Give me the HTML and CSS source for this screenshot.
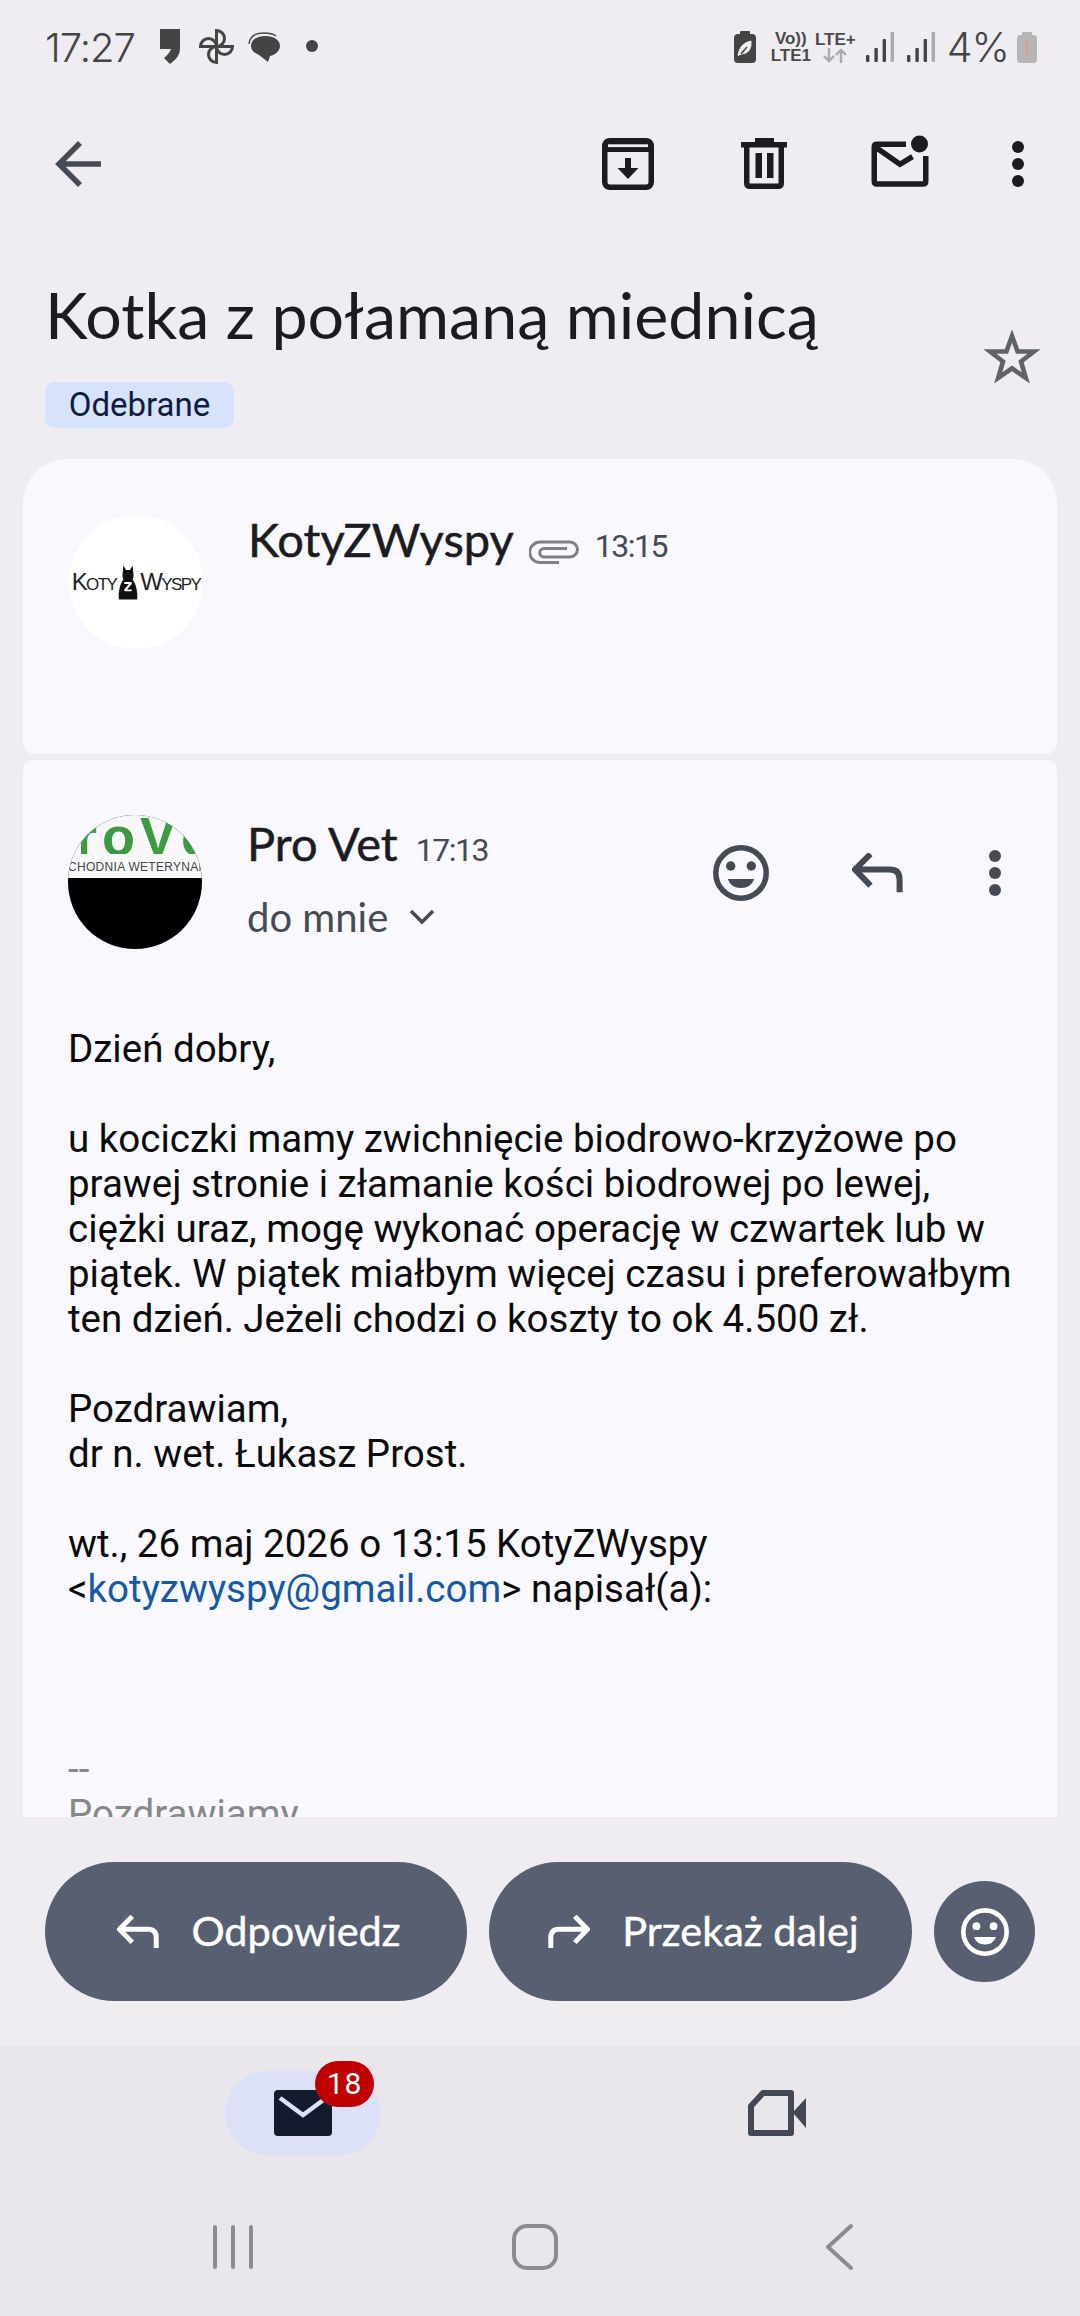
FILE: index.html
```html
<!DOCTYPE html>
<html lang="pl">
<head>
  <meta charset="UTF-8">
  <meta name="viewport" content="width=device-width, initial-scale=1">
  <title>Kotka z połamaną miednicą</title>
  <link rel="stylesheet" href="styles.css">
</head>
<body>
  <div class="screen">

    <div class="status-bar">
      <div class="time">17:27</div>
      <svg class="notif-icons" width="158" height="36" viewBox="160 30 158 36">
        <path d="M160 30H180V50Q180 58 170 65L164 59Q170 54 171 50H160Z" fill="#444"/>
        <g transform="translate(216.5 47.5)" fill="none" stroke="#444" stroke-width="3">
          <path d="M0 0V-16A8 8 0 0 1 0 0Z"/>
          <path d="M0 0V-16A8 8 0 0 1 0 0Z" transform="rotate(90)"/>
          <path d="M0 0V-16A8 8 0 0 1 0 0Z" transform="rotate(180)"/>
          <path d="M0 0V-16A8 8 0 0 1 0 0Z" transform="rotate(270)"/>
        </g>
        <path d="M249 45Q250 34 264 34Q272 34 276 37" fill="none" stroke="#444" stroke-width="1.5"/>
        <path d="M265 37C274 37 280 41 280 47C280 52 275 56 270 57L268 63L259 56C254 54 251 51 251 47C251 41 257 37 265 37Z" fill="#444"/>
        <circle cx="312" cy="47" r="6" fill="#444"/>
      </svg>
      <div class="status-right">
        <svg class="leaf-batt" width="22" height="32" viewBox="0 0 22 32">
          <rect x="6" y="0" width="10" height="4" rx="1" fill="#444"/>
          <rect x="0" y="3" width="22" height="29" rx="4" fill="#444"/>
          <path d="M4 24Q6 12 17 10Q18 22 8 23ZM4 25L11 17" fill="#f0eef3" stroke="#f0eef3" stroke-width="1"/>
          <path d="M7 23L13 16" stroke="#444" stroke-width="1.5"/>
        </svg>
        <div class="net net-volte"><span>Vo))</span><span>LTE1</span></div>
        <div class="net net-lte">
          <span>LTE+</span>
          <svg width="24" height="15" viewBox="0 0 24 15" fill="none" stroke="#aaa" stroke-width="2.4">
            <path d="M6 0V13M1 8L6 13L11 8"/>
            <path d="M18 15V2M13 7L18 2L23 7"/>
          </svg>
        </div>
        <svg class="signal" width="28" height="30" viewBox="0 0 28 30">
          <rect x="0" y="23" width="3.4" height="7" rx="1" fill="#444"/>
          <rect x="8.4" y="16" width="3.4" height="14" rx="1" fill="#444"/>
          <rect x="16.6" y="7" width="3.4" height="23" rx="1" fill="#444"/>
          <rect x="24.6" y="0" width="3.4" height="30" rx="1" fill="#aaa"/>
        </svg>
        <svg class="signal signal-2" width="28" height="30" viewBox="0 0 28 30">
          <rect x="0" y="23" width="3.4" height="7" rx="1" fill="#444"/>
          <rect x="8.4" y="16" width="3.4" height="14" rx="1" fill="#444"/>
          <rect x="16.6" y="7" width="3.4" height="23" rx="1" fill="#444"/>
          <rect x="24.6" y="0" width="3.4" height="30" rx="1" fill="#aaa"/>
        </svg>
        <div class="battery-pct">4%</div>
        <svg class="battery" width="20" height="31" viewBox="0 0 20 31">
          <rect x="5" y="0" width="10" height="4" rx="1" fill="#b6b5b8"/>
          <rect x="0" y="3" width="20" height="28" rx="3.5" fill="#b6b5b8"/>
          <rect x="9" y="9" width="2.4" height="11" fill="#e59a82"/>
          <rect x="9" y="22" width="2.4" height="3" fill="#e59a82"/>
        </svg>
      </div>
    </div>

    <div class="top-bar">
      <div class="icon-btn back-btn">
        <svg width="72" height="72" viewBox="0 0 72 72" fill="none" stroke="#454a54" stroke-width="5.5">
          <path d="M60 36H19M39 15L18 36L39 57"/>
        </svg>
      </div>
      <div class="top-actions">
        <div class="icon-btn">
          <svg width="72" height="72" viewBox="0 0 72 72" fill="none">
            <rect x="12.75" y="12.75" width="46.5" height="46.5" rx="5" stroke="#1c1b20" stroke-width="5.5"/>
            <rect x="12" y="12" width="48" height="12" fill="#1c1b20"/>
            <rect x="16" y="16.3" width="40" height="2.8" fill="#efedf2"/>
            <path d="M33 30H39V40H46.5L36 51L25.5 40H33Z" fill="#1c1b20"/>
          </svg>
        </div>
        <div class="icon-btn">
          <svg width="72" height="72" viewBox="0 0 72 72" fill="#1c1b20">
            <rect x="27" y="10" width="19" height="6"/>
            <rect x="13" y="14" width="46" height="5.5"/>
            <path d="M18.75 18V55Q18.75 58.25 22 58.25H50Q53.25 58.25 53.25 55V18" fill="none" stroke="#1c1b20" stroke-width="5.5"/>
            <rect x="27.5" y="25" width="6.5" height="25"/>
            <rect x="39" y="25" width="6.5" height="25"/>
          </svg>
        </div>
        <div class="icon-btn mail-btn">
          <svg width="72" height="72" viewBox="0 0 72 72" fill="none" stroke="#1c1b20" stroke-width="5.5">
            <path d="M42 16.3H13Q10.25 16.3 10.25 19V53Q10.25 56 13 56H59Q61.75 56 61.75 53V28"/>
            <path d="M12.7 20L36 36.3L48.5 28.7"/>
            <circle cx="55.5" cy="16" r="8.5" fill="#1c1b20" stroke="none"/>
          </svg>
        </div>
        <div class="icon-btn">
          <svg width="72" height="72" viewBox="0 0 72 72" fill="#1c1b20">
            <circle cx="36" cy="19" r="6"/>
            <circle cx="36" cy="36" r="6"/>
            <circle cx="36" cy="53" r="6"/>
          </svg>
        </div>
      </div>
    </div>

    <div class="subject">
      <div class="subject-main">
        <h1 class="subject-title">Kotka z połamaną miednicą</h1>
        <span class="chip">Odebrane</span>
      </div>
      <svg class="star" width="56" height="56" viewBox="0 0 56 56" fill="none" stroke="#5f6368" stroke-width="4.6">
        <path d="M28 6L33.6 21.5H50L37 31.5L41.8 48L28 38.4L14.2 48L19 31.5L6 21.5H22.4Z"/>
      </svg>
    </div>

    <div class="thread">
      <div class="card card-first">
        <div class="avatar avatar-koty">
          <span class="koty-text">Koty</span>
          <svg width="24" height="37" viewBox="0 0 26 37">
            <path d="M8 0L11 5H15L18 0L19 10Q19 14 18 15Q24 24 23 37H3Q2 24 8 15Q7 14 7 10Z" fill="#111"/>
            <path d="M9 18H17V20L12 26H17V28H9V26L14 20H9Z" fill="#fff"/>
          </svg>
          <span class="koty-text">Wyspy</span>
        </div>
        <div class="sender-line sender-first">
          <span class="sender-name">KotyZWyspy</span>
          <svg class="clip" width="51" height="24" viewBox="0 0 51 24" fill="none" stroke="#808080" stroke-width="3">
            <path d="M30 22.5H11A9.5 9.5 0 0 1 11 2H41A7.5 7.5 0 0 1 41 17H15A4 4 0 0 1 15 8.500H38"/>
          </svg>
          <span class="sender-time">13:15</span>
        </div>
      </div>

      <div class="card card-open">
        <div class="mail-head">
          <div class="avatar avatar-vet">
            <div class="vet-top">
              <div class="vet-logo">roVc</div>
              <div class="vet-sub">CHODNIA WETERYNAR</div>
            </div>
          </div>
          <div class="sender-info">
            <div class="sender-line">
              <span class="sender-name">Pro Vet</span>
              <span class="sender-time">17:13</span>
            </div>
            <div class="recipient">
              do mnie
              <svg width="26" height="16" viewBox="0 0 26 16" fill="none" stroke="#454a54" stroke-width="3.4">
                <path d="M2 2L13 13L24 2"/>
              </svg>
            </div>
          </div>
          <div class="mail-actions">
            <svg width="60" height="60" viewBox="-30 -30 60 60" fill="#454a54">
              <circle r="25.200" fill="none" stroke="#454a54" stroke-width="5.5"/>
              <circle cx="-10.300" cy="-7" r="4.700"/>
              <circle cx="10.300" cy="-7" r="4.700"/>
              <path d="M-13.300 6H13.300Q10 15 0 15Q-10 15 -13.300 6Z"/>
            </svg>
            <svg class="mail-reply" width="51" height="40" viewBox="0 0 51 40" fill="none" stroke="#454a54" stroke-width="6">
              <path d="M18.500 1L3 16.600L18.500 32.600M3 16.600H37.600Q47.600 16.600 47.600 26.600V39.300"/>
            </svg>
            <svg class="mail-more" width="14" height="48" viewBox="0 0 14 48" fill="#454a54">
              <circle cx="7" cy="7" r="6"/>
              <circle cx="7" cy="24" r="6"/>
              <circle cx="7" cy="41" r="6"/>
            </svg>
          </div>
        </div>

        <div class="mail-body">
          <p>Dzień dobry,</p>
          <p>u kociczki mamy zwichnięcie biodrowo-krzyżowe po prawej stronie i złamanie kości biodrowej po lewej, ciężki uraz, mogę wykonać operację w czwartek lub w piątek. W piątek miałbym więcej czasu i preferowałbym ten dzień. Jeżeli chodzi o koszty to ok 4.500 zł.</p>
          <p>Pozdrawiam,<br>dr n. wet. Łukasz Prost.</p>
          <p>wt., 26 maj 2026 o 13:15 KotyZWyspy<br>&lt;<a class="mail-link" href="#">kotyzwyspy@gmail.com</a>&gt; napisał(a):</p>
          <p class="signature">--<br>Pozdrawiamy</p>
        </div>
      </div>
    </div>

    <div class="actions">
      <div class="action-btn">
        <svg width="42" height="34" viewBox="0 0 51 40" fill="none" stroke="#fff" stroke-width="6">
          <path d="M18.500 1L3 16.600L18.500 32.600M3 16.600H37.600Q47.600 16.600 47.600 26.600V39.300"/>
        </svg>
        Odpowiedz
      </div>
      <div class="action-btn action-forward">
        <svg width="42" height="34" viewBox="0 0 51 40" fill="none" stroke="#fff" stroke-width="6">
          <path d="M32.500 1L48 16.600L32.500 32.600M48 16.600H13.400Q3.400 16.600 3.400 26.600V39.300"/>
        </svg>
        Przekaż dalej
      </div>
      <div class="action-emoji">
        <svg width="50" height="50" viewBox="-30 -30 60 60" fill="#fff">
          <circle r="26" fill="none" stroke="#fff" stroke-width="5.500"/>
          <circle cx="-10.300" cy="-7" r="4.700"/>
          <circle cx="10.300" cy="-7" r="4.700"/>
          <path d="M-13.300 6H13.300Q10 15 0 15Q-10 15 -13.300 6Z"/>
        </svg>
      </div>
    </div>

    <div class="bottom">
      <div class="tabs">
        <div class="tab-mail">
          <svg width="58" height="46" viewBox="0 0 58 46">
            <rect width="58" height="46" rx="4" fill="#141b2c"/>
            <path d="M6 8L29 25L52 8" fill="none" stroke="#dce1f8" stroke-width="4.500"/>
          </svg>
          <span class="badge">18</span>
        </div>
        <div class="tab-video">
          <svg width="58" height="46" viewBox="0 0 58 46" fill="none">
            <path d="M3 43V16L15 3H43V43Z" stroke="#444854" stroke-width="6" stroke-linejoin="round"/>
            <path d="M46 21L58 8V38L46 24Z" fill="#444854"/>
          </svg>
        </div>
      </div>
      <div class="sys-nav">
        <svg width="40" height="48" viewBox="0 0 40 48" fill="none" stroke="#8c8c8e" stroke-width="4" stroke-linecap="round">
          <path d="M2 4V44M20 4V44M38 4V44"/>
        </svg>
        <svg width="48" height="48" viewBox="0 0 48 48" fill="none" stroke="#8c8c8e" stroke-width="4">
          <rect x="3" y="3" width="42" height="42" rx="13"/>
        </svg>
        <svg width="28" height="48" viewBox="0 0 28 48" fill="none" stroke="#8c8c8e" stroke-width="4" stroke-linecap="round" stroke-linejoin="round">
          <path d="M26 3L3 24L26 45"/>
        </svg>
      </div>
    </div>

  </div>
</body>
</html>
```

FILE: styles.css
```css
* {
  box-sizing: border-box;
}

body {
  margin: 0;
  background-color: #efedf2;
  font-family: 'Roboto', sans-serif;
}

.screen {
  width: 1080px;
  height: 2316px;
  display: flex;
  flex-direction: column;
  overflow: hidden;
}

/* status bar */
.status-bar {
  height: 94px;
  padding: 0 43px 0 45px;
  display: flex;
  align-items: center;
  color: #444;
}

.time {
  width: 115px;
  font-family: 'Inter', sans-serif;
  font-size: 40px;
  font-weight: 300;
  letter-spacing: -1px;
}

.status-right {
  margin-left: auto;
  display: flex;
  align-items: center;
}

.net {
  display: flex;
  flex-direction: column;
  align-items: center;
  font-family: 'Liberation Sans', sans-serif;
  font-size: 17px;
  font-weight: 700;
  line-height: 17px;
  color: #4a4a4a;
}

.net-volte {
  margin-left: 15px;
  width: 40px;
}

.net-lte {
  margin-left: 4px;
  width: 41px;
}

.signal {
  margin-left: 10px;
}

.signal-2 {
  margin-left: 13px;
}

.battery-pct {
  margin-left: 12px;
  font-family: 'Inter', sans-serif;
  font-size: 41px;
  font-weight: 300;
  letter-spacing: -1px;
}

.battery {
  margin-left: 8px;
}

/* top bar */
.top-bar {
  height: 140px;
  padding: 0 26px 0 41px;
  display: flex;
  align-items: center;
  justify-content: space-between;
}

.top-actions {
  display: flex;
  gap: 64px;
}

.icon-btn {
  width: 72px;
  height: 72px;
}

.mail-btn {
  margin-right: -18px;
}

/* subject */
.subject {
  height: 225px;
  padding: 49px 40px 0 45px;
  display: flex;
  justify-content: space-between;
}

.subject-title {
  margin: 0 0 37px;
  font-family: 'Lato', sans-serif;
  font-size: 64.5px;
  font-weight: 400;
  line-height: 62px;
  color: #1c1b1f;
}

.chip {
  display: block;
  width: 189px;
  height: 46px;
  line-height: 46px;
  text-align: center;
  background-color: #d7e2fd;
  border-radius: 10px;
  font-size: 33px;
  color: #0f1c3f;
}

.star {
  margin-top: 47px;
}

/* thread */
.thread {
  flex: 1;
  padding: 0 23px;
  display: flex;
  flex-direction: column;
  gap: 6px;
  overflow: hidden;
}

.card {
  background-color: #f9f8fe;
}

.card-first {
  height: 295px;
  padding: 56px 46px 0;
  border-radius: 44px 44px 10px 10px;
  display: flex;
  gap: 45px;
}

.card-open {
  flex: 1;
  padding: 55px 23px 0 45px;
  border-radius: 10px 10px 0 0;
  overflow: hidden;
}

.avatar {
  width: 134px;
  height: 134px;
  border-radius: 50%;
  overflow: hidden;
  flex-shrink: 0;
}

.avatar-koty {
  background-color: #fff;
  display: flex;
  align-items: center;
  justify-content: center;
}

.koty-text {
  font-family: 'Liberation Sans', sans-serif;
  font-size: 24px;
  font-variant: small-caps;
  letter-spacing: -1.6px;
  color: #222;
}

.avatar-vet {
  background-color: #000;
}

.vet-top {
  height: 63px;
  background-color: #f8f8fb;
  overflow: hidden;
}

.vet-logo {
  width: 114px;
  height: 39px;
  margin-left: 13px;
  font-family: 'Liberation Sans', sans-serif;
  font-size: 54px;
  font-weight: 700;
  line-height: 42px;
  letter-spacing: 5px;
  text-indent: -5px;
  color: #3d9a40;
  white-space: nowrap;
  overflow: hidden;
}

.vet-sub {
  margin-top: 6px;
  font-family: 'Liberation Sans', sans-serif;
  font-size: 12px;
  line-height: 14px;
  text-align: center;
  color: #444;
  white-space: nowrap;
  letter-spacing: 0.3px;
}

.sender-line {
  display: flex;
  align-items: baseline;
  white-space: nowrap;
}

.sender-first {
  margin-top: -4px;
  height: 60px;
}

.sender-name {
  font-family: 'Lato', sans-serif;
  font-size: 47px;
  -webkit-text-stroke: 0.5px #1c1b1f;
  color: #1c1b1f;
}

.clip {
  margin: 0 15px 7px;
  align-self: flex-end;
}

.sender-time {
  font-family: 'Roboto', sans-serif;
  font-size: 32px;
  letter-spacing: -1.5px;
  color: #454a54;
}

.mail-head {
  display: flex;
}

.sender-info {
  margin-left: 45px;
}

.sender-info .sender-time {
  margin-left: 18px;
}

.recipient {
  margin-top: 22px;
  display: flex;
  align-items: center;
  gap: 21px;
  font-family: 'Lato', sans-serif;
  font-size: 40px;
  color: #454a54;
}

.mail-actions {
  margin-left: auto;
  margin-right: 32px;
  height: 116px;
  display: flex;
  align-items: center;
}

.mail-reply {
  margin-left: 81px;
}

.mail-more {
  margin-left: 85px;
}

.mail-body {
  margin-top: 77px;
  padding-right: 16px;
  font-size: 38.5px;
  line-height: 45px;
  color: #0b0b0c;
}

.mail-body p {
  margin: 0 0 45px;
}

.mail-link {
  color: #1558a8;
  text-decoration: none;
}

.mail-body .signature {
  margin-top: 135px;
  color: #888;
}

/* reply buttons */
.actions {
  height: 229px;
  padding: 45px 45px 0;
  display: flex;
  align-items: flex-start;
}

.action-btn {
  width: 422px;
  height: 139px;
  padding: 0 0 4px 6px;
  display: flex;
  align-items: center;
  justify-content: center;
  gap: 32px;
  background-color: #585f71;
  border-radius: 70px;
  font-family: 'Lato', sans-serif;
  font-size: 41.5px;
  -webkit-text-stroke: 0.4px #fff;
  color: #fff;
}

.action-btn svg {
  margin-top: 4px;
}

.action-forward {
  margin-left: 22px;
  width: 423px;
}

.action-emoji {
  margin: 19px 0 0 22px;
  width: 101px;
  height: 101px;
  border-radius: 50%;
  background-color: #585f71;
  display: flex;
  align-items: center;
  justify-content: center;
}

/* bottom nav */
.bottom {
  height: 270px;
  background-color: #e9e7ec;
}

.tabs {
  height: 177px;
  padding: 25px 0 0 225px;
  display: flex;
  gap: 318px;
}

.tab-mail,
.tab-video {
  width: 156px;
  height: 84px;
  display: flex;
  align-items: center;
  justify-content: center;
}

.tab-mail {
  position: relative;
  background-color: #dce1f8;
  border-radius: 42px;
}

.badge {
  position: absolute;
  left: 90px;
  top: -10px;
  width: 59px;
  height: 46px;
  border-radius: 23px;
  background-color: #c00000;
  color: #fff;
  font-size: 30px;
  line-height: 46px;
  text-align: center;
  letter-spacing: 1px;
}

.sys-nav {
  padding-left: 213px;
  display: flex;
  gap: 258px;
}

.sys-nav svg:last-child {
  margin-left: 8px;
}
```
